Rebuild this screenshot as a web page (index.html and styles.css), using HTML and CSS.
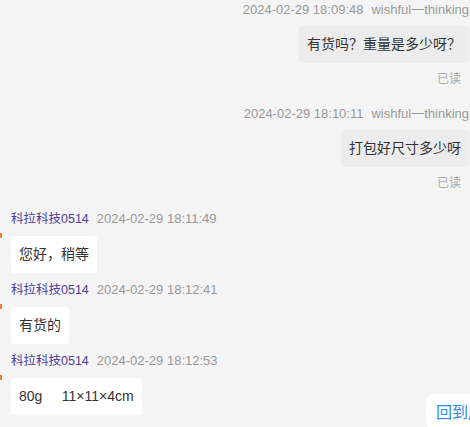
FILE: index.html
```html
<!DOCTYPE html>
<html lang="zh-CN">
<head>
    <meta charset="UTF-8">
    <meta name="viewport" content="width=device-width, initial-scale=1.0">
    <title>聊天记录</title>
    <link rel="stylesheet" href="styles.css">
</head>
<body>
    <div class="chat">
        <div class="msg msg-right first">
            <div class="meta"><span>2024-02-29 18:09:48</span><span class="user">wishful一thinking</span></div>
            <div class="bubble">有货吗？重量是多少呀？</div>
            <div class="read">已读</div>
        </div>

        <div class="msg msg-right">
            <div class="meta"><span>2024-02-29 18:10:11</span><span class="user">wishful一thinking</span></div>
            <div class="bubble">打包好尺寸多少呀</div>
            <div class="read">已读</div>
        </div>

        <div class="msg msg-left">
            <div class="meta"><span class="name">科拉科技0514</span><span>2024-02-29 18:11:49</span></div>
            <div class="bubble">您好，稍等</div>
        </div>

        <div class="msg msg-left">
            <div class="meta"><span class="name">科拉科技0514</span><span>2024-02-29 18:12:41</span></div>
            <div class="bubble">有货的</div>
        </div>

        <div class="msg msg-left">
            <div class="meta"><span class="name">科拉科技0514</span><span>2024-02-29 18:12:53</span></div>
            <div class="bubble pre">80g     11×11×4cm</div>
        </div>
    </div>

    <button class="to-bottom">回到底部</button>
</body>
</html>
```

FILE: styles.css
```css
body {
    margin: 0;
    height: 427px;
    overflow: hidden;
    position: relative;
    background: #f4f4f4;
    font-family: "Liberation Sans", "Noto Sans CJK SC", sans-serif;
    color: #333;
}

.chat {
    padding: 0 1px 0 11px;
}

.msg {
    display: flex;
    flex-direction: column;
    margin-top: 16px;
}

.msg.first {
    margin-top: 0;
}

.msg-right {
    align-items: flex-end;
}

.msg-left {
    align-items: flex-start;
    margin-top: 7px;
}

.msg-right + .msg-left {
    margin-top: 17px;
}

.meta {
    display: flex;
    gap: 8px;
    font-size: 13px;
    line-height: 20px;
    color: #999;
    white-space: nowrap;
}

.meta .name {
    color: #4a3fa0;
    font-size: 12.5px;
}

.bubble {
    margin-top: 6px;
    padding: 8px;
    font-size: 14px;
    line-height: 21px;
    border-radius: 4px;
}

.msg-right .bubble {
    background: #ececec;
}

.msg-left .bubble {
    margin-top: 7px;
    background: #fff;
    position: relative;
}

/* clipped avatar edge */
.msg-left .bubble::before {
    content: "";
    position: absolute;
    left: -11px;
    top: -3px;
    width: 2px;
    height: 5px;
    background: #f07c3a;
}

.pre {
    white-space: pre;
}

.read {
    margin-top: 7px;
    margin-right: 8px;
    font-size: 12px;
    line-height: 18px;
    color: #aaa;
}

.to-bottom {
    position: absolute;
    left: 426px;
    top: 394px;
    width: 90px;
    height: 36px;
    padding: 0 10px 3px;
    display: flex;
    align-items: center;
    border: none;
    border-radius: 8px;
    background: #fff;
    color: #2a8cf0;
    font-family: "Noto Sans CJK SC", sans-serif;
    font-size: 16px;
    cursor: pointer;
}
```
